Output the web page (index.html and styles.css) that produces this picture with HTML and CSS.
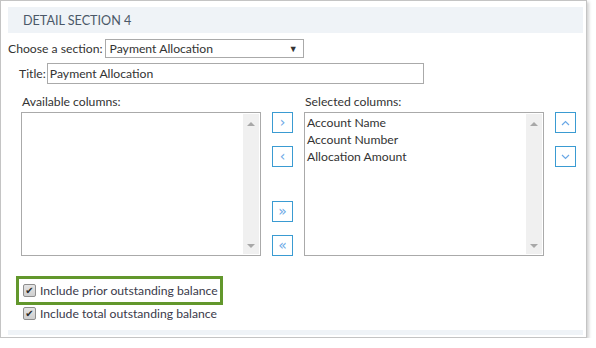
FILE: index.html
```html
<!DOCTYPE html>
<html lang="en">
<head>
    <meta charset="UTF-8">
    <title>Detail Section 4</title>
    <link rel="stylesheet" href="styles.css">
</head>
<body>
    <div class="panel">
        <div class="band band-top">DETAIL SECTION 4</div>

        <div class="row row-section">
            <label>Choose a section:</label>
            <div class="select">
                <span>Payment Allocation</span>
                <span class="caret">&#9660;</span>
            </div>
        </div>

        <div class="row row-title">
            <label>Title:</label>
            <div class="input">Payment Allocation</div>
        </div>

        <div class="columns">
            <div class="col-block">
                <div class="col-label">Available columns:</div>
                <div class="listbox">
                    <div class="items"></div>
                    <div class="scroll"><span class="up"></span><span class="down"></span></div>
                </div>
            </div>

            <div class="btn-col">
                <button class="btn">&#8250;</button>
                <button class="btn">&#8249;</button>
                <div class="spacer"></div>
                <button class="btn">&#187;</button>
                <button class="btn">&#171;</button>
            </div>

            <div class="col-block">
                <div class="col-label">Selected columns:</div>
                <div class="listbox">
                    <div class="items">
                        <div>Account Name</div>
                        <div>Account Number</div>
                        <div>Allocation Amount</div>
                    </div>
                    <div class="scroll"><span class="up"></span><span class="down"></span></div>
                </div>
            </div>

            <div class="btn-col">
                <button class="btn">
                    <svg width="9" height="6" viewBox="0 0 9 6"><path d="M1 5 L4.5 1.5 L8 5" fill="none" stroke="#6aa8e6" stroke-width="1.2"/></svg>
                </button>
                <button class="btn">
                    <svg width="9" height="6" viewBox="0 0 9 6"><path d="M1 1 L4.5 4.5 L8 1" fill="none" stroke="#6aa8e6" stroke-width="1.2"/></svg>
                </button>
            </div>
        </div>

        <div class="checks">
            <div class="check highlight"><span class="box">&#10004;</span>Include prior outstanding balance</div>
            <div class="check plain"><span class="box">&#10004;</span>Include total outstanding balance</div>
        </div>

        <div class="band band-bottom"></div>
    </div>
</body>
</html>
```

FILE: styles.css
```css
body {
    margin: 0;
    background: #fff;
    font-family: Lato, "Open Sans", sans-serif;
    font-size: 12.2px;
    color: #333;
}
.panel {
    width: 575px;
    height: 330px;
    border: 1px solid #c4c4c4;
    padding: 6px 3px 0 7px;
    box-shadow: 2px 2px 3px rgba(0, 0, 0, 0.18);
    background: #fff;
}
.band {
    background: #eff3f7;
}
.band-top {
    height: 26px;
    line-height: 27px;
    padding-left: 15px;
    font-size: 12.6px;
    color: #4b5868;
}
.band-bottom {
    height: 5px;
    margin-top: 8px;
}
.row {
    display: flex;
    align-items: center;
    white-space: nowrap;
}
.row-section {
    margin-top: 6px;
    gap: 2px;
}
.row-title {
    margin-top: 5px;
    padding-left: 11px;
    gap: 1px;
}
.select {
    width: 188px;
    height: 17px;
    border: 1px solid #aaa;
    padding: 0 5px 0 4px;
    display: flex;
    justify-content: space-between;
    align-items: center;
}
.caret {
    font-size: 9px;
    color: #333;
}
.input {
    width: 373px;
    height: 19px;
    line-height: 19px;
    border: 1px solid #aaa;
    padding-left: 2px;
}
.columns {
    display: flex;
    gap: 11px;
    padding-left: 13px;
    margin-top: 9px;
}
.col-label {
    height: 19px;
    line-height: 17px;
    padding-left: 1px;
}
.listbox {
    width: 238px;
    height: 142px;
    border: 1px solid #aaa;
    display: flex;
}
.items {
    flex: 1;
    padding: 1px 0 0 2px;
    line-height: 17px;
}
.scroll {
    width: 16px;
    background: #f0f0f0;
    margin: 1px 1px 1px 0;
    display: flex;
    flex-direction: column;
    justify-content: space-between;
    align-items: center;
    padding: 8px 0 6px;
}
.scroll span {
    width: 0;
    height: 0;
    border-left: 4px solid transparent;
    border-right: 4px solid transparent;
}
.scroll .up { border-bottom: 4px solid #a8a8a8; }
.scroll .down { border-top: 4px solid #a8a8a8; }
.btn-col {
    display: flex;
    flex-direction: column;
    gap: 13px;
    padding-top: 19px;
}
.btn-col .spacer {
    height: 8px;
}
.btn {
    width: 21px;
    height: 21px;
    padding: 0;
    margin: 0;
    border: 1px solid #3a9bd2;
    background: #fff;
    color: #6aa8e6;
    font-family: "DejaVu Sans", sans-serif;
    font-size: 14px;
    line-height: 17px;
    display: flex;
    align-items: center;
    justify-content: center;
}
.checks {
    margin-top: 20px;
    padding-left: 8px;
}
.check {
    display: flex;
    align-items: center;
    gap: 4px;
    white-space: nowrap;
    color: #3a3a4a;
}
.highlight {
    border: 3px solid #62972c;
    height: 23px;
    width: 197px;
    padding-left: 4px;
}
.plain {
    height: 17px;
    padding-left: 7px;
}
.box {
    width: 11px;
    height: 11px;
    border: 1px solid #8e8e8e;
    border-radius: 2px;
    background: linear-gradient(#e4e4e4, #cfcfcf);
    font-family: "DejaVu Sans", sans-serif;
    font-size: 10px;
    font-weight: bold;
    line-height: 11px;
    text-align: center;
    color: #2a2a2a;
}
```
